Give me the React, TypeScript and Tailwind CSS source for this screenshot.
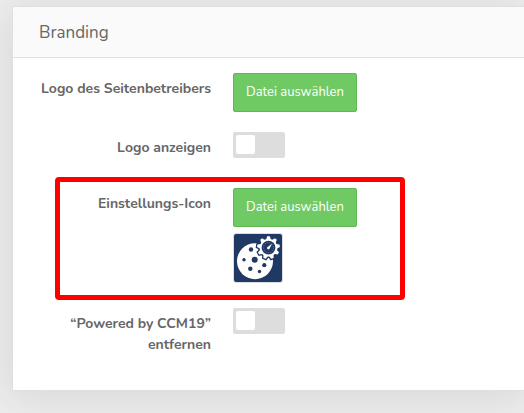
import { useId, type ReactNode } from "react";

function Row({ label, htmlFor, marked, children }: { label: string; htmlFor: string; marked?: boolean; children: ReactNode }) {
  return (
    <div className="relative flex gap-[22px] pb-5">
      <label htmlFor={htmlFor} className="w-[174px] shrink-0 pt-[5px] pb-[10px] text-right text-[14px] leading-[21px] font-bold text-[#666]">
        {label}
      </label>
      <div className="min-w-0">{children}</div>
      {marked && (
        <div className="pointer-events-none absolute -top-[11px] bottom-[8px] left-[18px] w-[350px] rounded-[4px] border-[5px] border-[#f00]" />
      )}
    </div>
  );
}

function FileButton({ id }: { id: string }) {
  return (
    <button
      id={id}
      type="button"
      className="block h-[39px] rounded-[2px] border border-[#62b657] bg-[#70ca63] px-3 pb-[2px] text-[13px] leading-[20px] whitespace-nowrap text-white"
    >
      Datei auswählen
    </button>
  );
}

function Toggle({ id }: { id: string }) {
  return (
    <input
      id={id}
      type="checkbox"
      role="switch"
      className="block h-[26px] w-[52px] appearance-none rounded-[2px] bg-[#ddd] p-[3px] before:block before:h-[19px] before:w-[19px] before:rounded-[2px] before:bg-white checked:bg-[#70ca63] checked:before:ml-auto"
    />
  );
}

const teeth = [0, 40, 80, 120, 160, 200, 240, 280, 320];

function Gear() {
  return (
    <>
      {teeth.map((angle) => (
        <path key={angle} d="M32 6 L33.200 2.300 H35.800 L37 6 Z" transform={`rotate(${angle} 34.500 13.700)`} />
      ))}
      <circle cx="34.500" cy="13.700" r="8.900" />
    </>
  );
}

function CookieIcon() {
  return (
    <svg viewBox="0 0 48 48" className="block size-12 rounded-[2px] bg-[#203864]" role="img" aria-label="Cookie">
      <circle cx="21" cy="27.200" r="18" fill="#fff" />
      <g fill="#203864">
        <circle cx="20.700" cy="25.700" r="3" />
        <circle cx="17" cy="15.500" r="2.200" />
        <circle cx="10" cy="25.700" r="1.700" />
        <circle cx="16.300" cy="34.700" r="2.200" />
        <circle cx="30.300" cy="31.200" r="2.100" />
        <circle cx="25.500" cy="37.500" r="1.700" />
      </g>
      <g fill="#203864" stroke="#203864" strokeWidth="2.600">
        <Gear />
      </g>
      <g fill="#fff">
        <Gear />
      </g>
      <circle cx="34.500" cy="13.700" r="6.900" fill="#203864" />
      <circle cx="34.500" cy="13.700" r="5" fill="none" stroke="#8f9bb3" strokeWidth="0.700" strokeDasharray="1 1.400" />
      <path d="M38 9.800 L35.400 15 A1.500 1.500 0 0 1 33 13.400 Z" fill="#fff" />
    </svg>
  );
}

export default function App() {
  const id = useId();
  return (
    <main className="overflow-hidden bg-[#ededed] pt-[6px] pb-[23px] pl-3 font-['Nunito','Open_Sans',sans-serif]">
      <section className="rounded-tl-[3px] border border-r-0 border-[#e0e0e0] bg-white shadow-[0_5px_40px_rgba(50,50,65,0.13)]">
        <h2 className="rounded-tl-[3px] border-b border-[#e0e0e0] bg-[#fafafa] px-[26px] pt-[13px] pb-[11px] text-[17px] leading-[26px] font-normal text-[#666]">
          Branding
        </h2>
        <form className="px-6 pt-[15px] pb-[5px]">
          <Row label="Logo des Seitenbetreibers" htmlFor={`${id}-logo`}>
            <FileButton id={`${id}-logo`} />
          </Row>
          <Row label="Logo anzeigen" htmlFor={`${id}-show`}>
            <Toggle id={`${id}-show`} />
          </Row>
          <Row label="Einstellungs-Icon" htmlFor={`${id}-icon`} marked>
            <FileButton id={`${id}-icon`} />
            <div className="mt-[6px] mb-[5px] w-fit rounded-[3px] border border-[#ddd]">
              <CookieIcon />
            </div>
          </Row>
          <Row label="“Powered by CCM19” entfernen" htmlFor={`${id}-powered`}>
            <Toggle id={`${id}-powered`} />
          </Row>
        </form>
      </section>
    </main>
  );
}
